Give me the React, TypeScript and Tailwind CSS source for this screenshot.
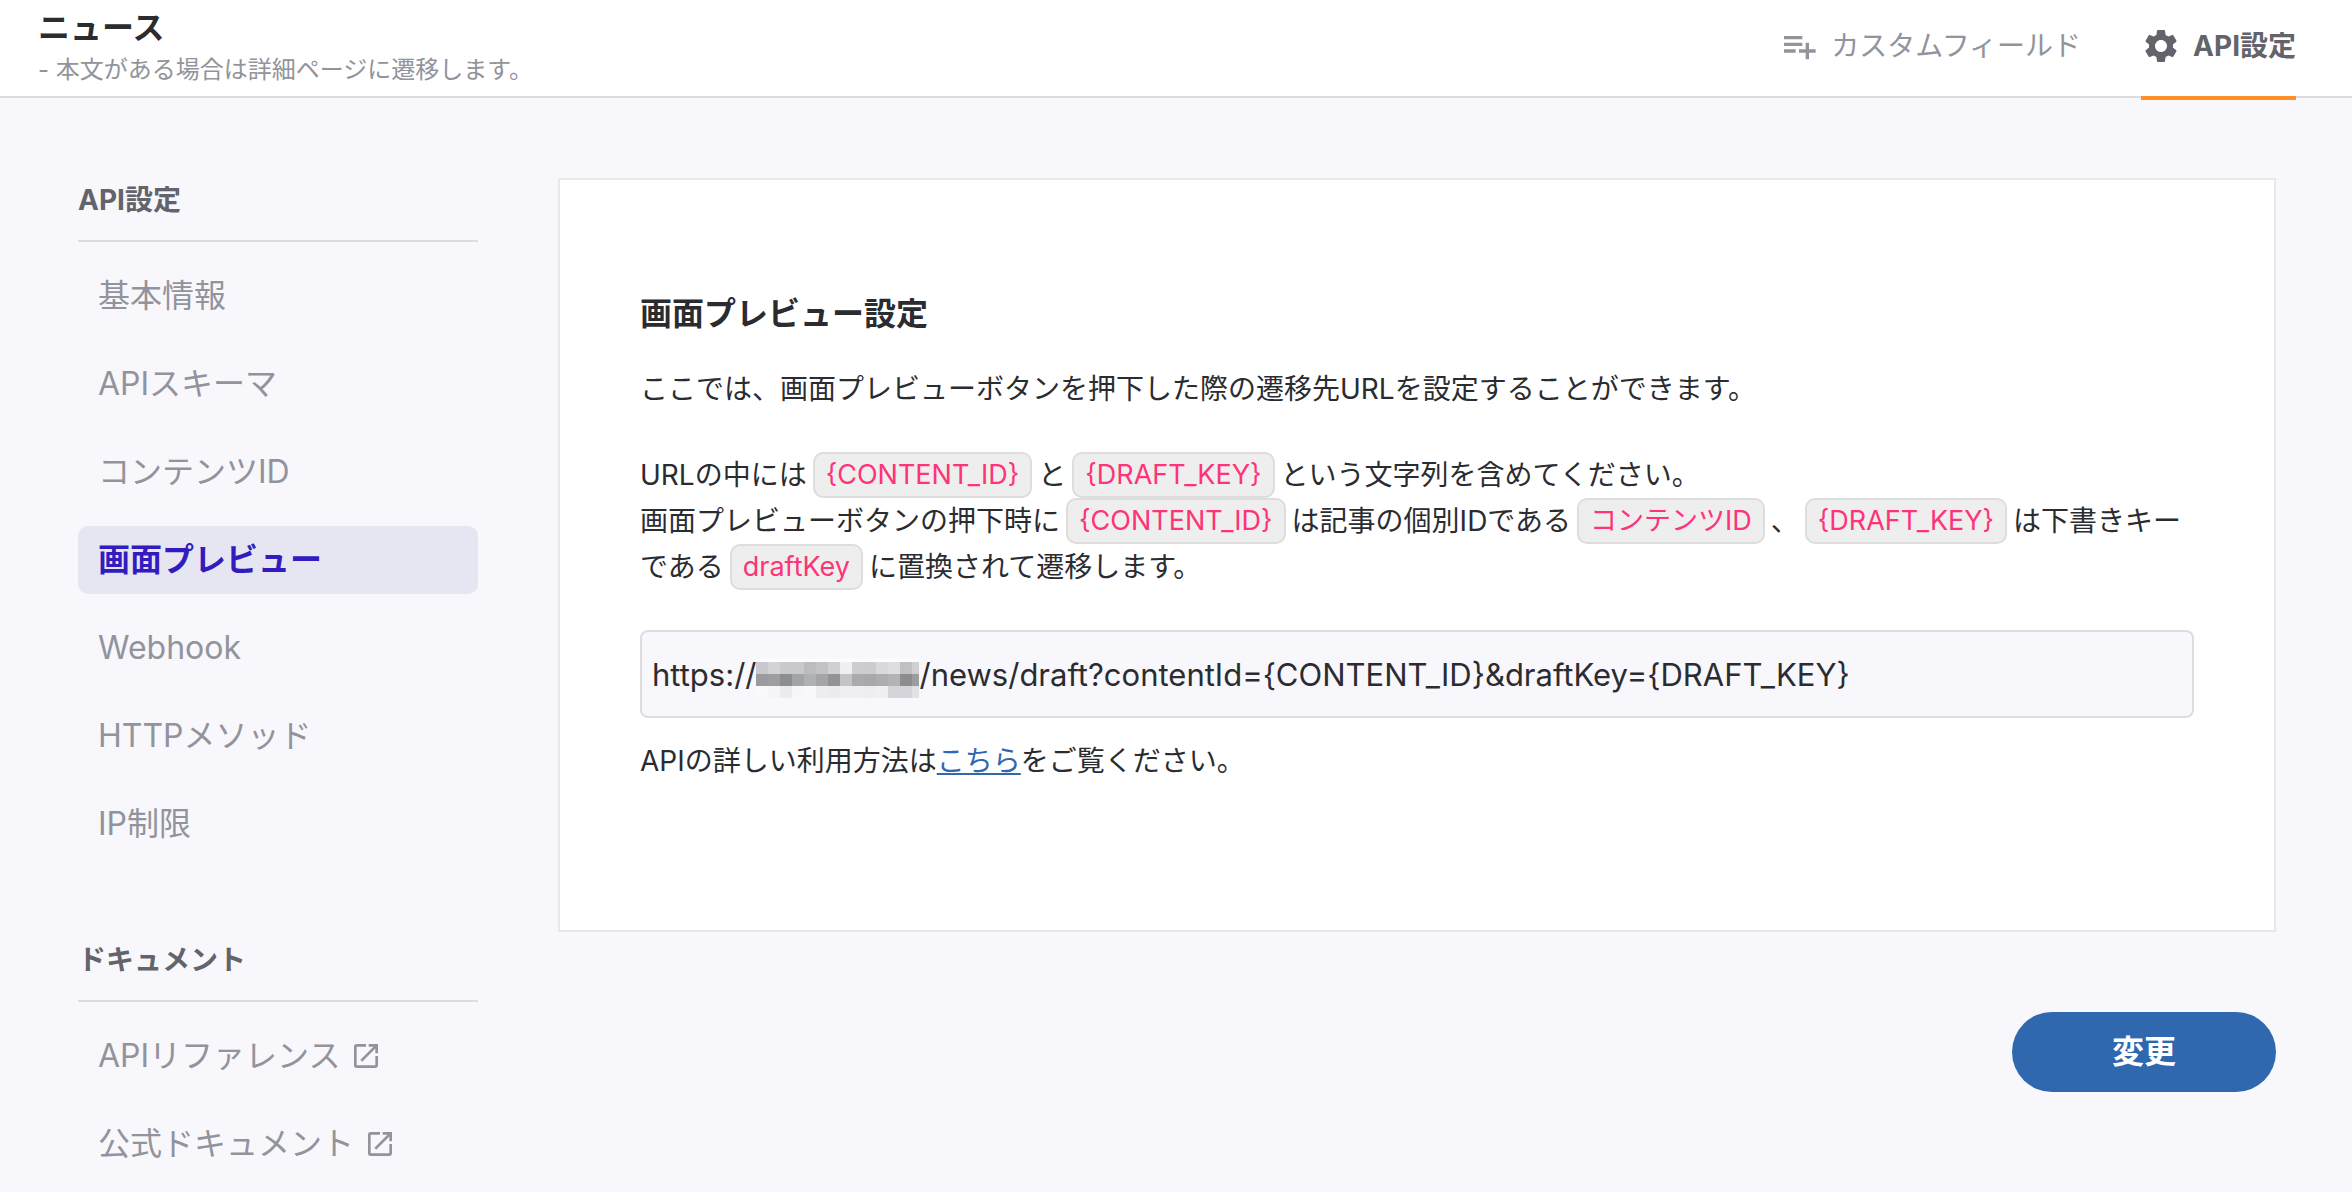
import { MdPlaylistAdd, MdSettings, MdOpenInNew } from "react-icons/md";

const FONT = "font-['Inter','Noto_Sans_CJK_JP',sans-serif]";

const settingsLinks = [
  { label: "基本情報" },
  { label: "APIスキーマ" },
  { label: "コンテンツID" },
  { label: "画面プレビュー", active: true },
  { label: "Webhook" },
  { label: "HTTPメソッド" },
  { label: "IP制限" },
];

const documentLinks = [
  { label: "APIリファレンス", external: true },
  { label: "公式ドキュメント", external: true },
];

type NavLink = { label: string; active?: boolean; external?: boolean };

function NavSection({ title, links }: { title: string; links: NavLink[] }) {
  return (
    <section>
      <h2 className="border-b-2 border-[#dddddd] pb-[18px] text-[28px] leading-[44px] font-bold text-[#63646b]">
        {title}
      </h2>
      <ul className="mt-5 flex flex-col gap-5">
        {links.map((link) => (
          <li key={link.label}>
            <a
              href="#"
              aria-current={link.active ? "page" : undefined}
              className={
                link.active
                  ? "flex h-[68px] items-center rounded-[10px] bg-[#e6e6f2] px-5 text-[32px] font-bold text-[#331cbf]"
                  : "flex h-[68px] items-center gap-[10px] rounded-[10px] px-5 text-[32px] text-[#92939b]"
              }
            >
              {link.label}
              {link.external && <MdOpenInNew className="size-8" />}
            </a>
          </li>
        ))}
      </ul>
    </section>
  );
}

function Code({ children }: { children: string }) {
  return (
    <code
      className={`${FONT} mx-[6px] inline-block h-[46px] rounded-[10px] border-2 border-[#dddddd] bg-[#eeeeee] px-[11px] align-top text-[27px] leading-[42px] text-[#ff3377]`}
    >
      {children}
    </code>
  );
}

const mosaic = [
  "bg-[#c9c9cd]", "bg-[#d2d3d6]", "bg-[#c9c9cc]", "bg-[#c9c9cc]", "bg-[#bbbbc0]", "bg-[#c2c2c7]", "bg-[#d0d0d4]",
  "bg-[#f0f0f4]", "bg-[#cccdcf]", "bg-[#cacccd]", "bg-[#dadadd]", "bg-[#dedee1]", "bg-[#bfc0c3]", "bg-[#d0d0d3]",
  "bg-[#9b9a9f]", "bg-[#9d9da2]", "bg-[#8d8e92]", "bg-[#a3a4a8]", "bg-[#b0b1b5]", "bg-[#a5a4a9]", "bg-[#939297]",
  "bg-[#c3c3c8]", "bg-[#aaabae]", "bg-[#a6a8aa]", "bg-[#adadb0]", "bg-[#b3b3b7]", "bg-[#8c8b90]", "bg-[#9c9da1]",
  "bg-[#f8f8fd]", "bg-[#f5f5f8]", "bg-[#ececef]", "bg-[#f7f7fb]", "bg-[#f8f8fc]", "bg-[#ededf0]", "bg-[#ececef]",
  "bg-[#efeff3]", "bg-[#efeff1]", "bg-[#eeeef0]", "bg-[#f0f0f3]", "bg-[#d5d4da]", "bg-[#d5d5d9]", "bg-[#e2e2e6]",
];

export default function App() {
  return (
    <div lang="ja" className={`${FONT} min-h-screen bg-[#f8f7fc] text-[#2b2c30]`}>
      <header className="flex h-[98px] items-start justify-between border-b-2 border-[#dddddd] bg-white pr-14 pl-[38px]">
        <div className="pt-1">
          <h1 className="text-[32px] leading-[48px] font-bold">ニュース</h1>
          <p className="text-2xl leading-[36px] text-[#92939b]">- 本文がある場合は詳細ページに遷移します。</p>
        </div>
        <nav className="flex gap-[60px] text-[28px]">
          <a href="#" className="flex h-[100px] items-center gap-3 pb-2 text-[#92939b]">
            <MdPlaylistAdd className="size-10" />
            カスタムフィールド
          </a>
          <a
            href="#"
            aria-current="page"
            className="flex h-[100px] items-center gap-3 border-b-4 border-[#ff8f27] pb-1 font-bold text-[#63646b]"
          >
            <MdSettings className="size-10" />
            API設定
          </a>
        </nav>
      </header>
      <div className="flex items-start gap-20 pt-20 pr-[76px] pb-8 pl-[78px]">
        <aside className="flex w-[400px] shrink-0 flex-col gap-20">
          <NavSection title="API設定" links={settingsLinks} />
          <NavSection title="ドキュメント" links={documentLinks} />
        </aside>
        <main className="flex min-w-0 flex-1 flex-col items-end gap-20">
          <section className="w-full border-2 border-[#e8e8ea] bg-white px-20 pt-[110px] pb-[146px]">
            <h2 className="text-[32px] leading-[48px] font-bold">画面プレビュー設定</h2>
            <p className="mt-7 text-[28px] leading-[46px]">
              ここでは、画面プレビューボタンを押下した際の遷移先URLを設定することができます。
            </p>
            <p className="mt-10 text-[28px] leading-[46px]">
              URLの中には
              <Code>{"{CONTENT_ID}"}</Code>と<Code>{"{DRAFT_KEY}"}</Code>
              という文字列を含めてください。
              <br />
              画面プレビューボタンの押下時に
              <Code>{"{CONTENT_ID}"}</Code>
              は記事の個別IDである
              <Code>コンテンツID</Code>、<Code>{"{DRAFT_KEY}"}</Code>
              は下書きキーである
              <Code>draftKey</Code>
              に置換されて遷移します。
            </p>
            <label className="mt-10 flex h-[88px] items-center rounded-lg border-2 border-[#dddddd] bg-[#f8f7fc] px-[10px] pt-0.5 text-[31px]">
              <span>https://</span>
              <span
                aria-hidden="true"
                className="mt-1.5 grid shrink-0 grid-cols-[repeat(13,12px)_7px] border-t-[3px] border-[#fcfcfe]"
              >
                {mosaic.map((tone, i) => (
                  <span key={i} className={`${tone} h-3`} />
                ))}
              </span>
              <input
                type="text"
                aria-label="プレビューURL"
                defaultValue="/news/draft?contentId={CONTENT_ID}&draftKey={DRAFT_KEY}"
                className="min-w-0 flex-1 bg-transparent outline-none"
              />
            </label>
            <p className="mt-5 text-[28px] leading-[46px]">
              APIの詳しい利用方法は
              <a href="#" className="text-[#2f68af] underline decoration-2 underline-offset-2">
                こちら
              </a>
              をご覧ください。
            </p>
          </section>
          <button type="button" className="h-20 w-[264px] rounded-full bg-[#2f68af] text-[32px] font-bold text-white">
            変更
          </button>
        </main>
      </div>
    </div>
  );
}
